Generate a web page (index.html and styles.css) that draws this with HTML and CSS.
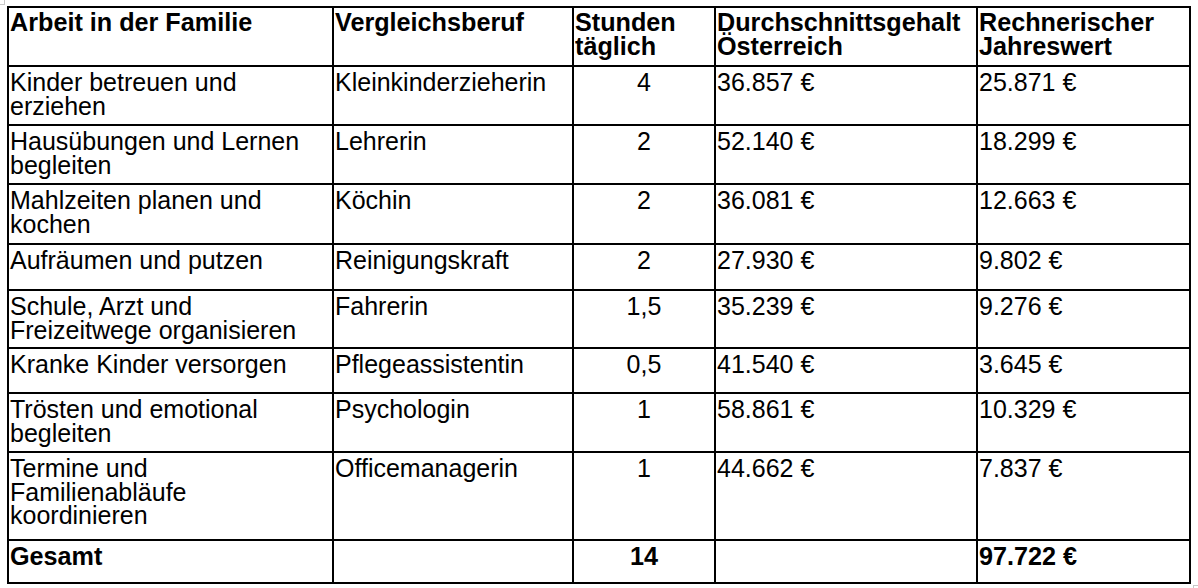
FILE: index.html
```html
<!DOCTYPE html>
<html lang="de">
<head>
<meta charset="utf-8">
<title>Arbeit in der Familie</title>
<link rel="stylesheet" href="styles.css">
</head>
<body>
<span class="mark mark-tl"></span>
<table class="grid">
  <colgroup>
    <col class="c1"><col class="c2"><col class="c3"><col class="c4"><col class="c5">
  </colgroup>
  <thead>
    <tr class="h2">
      <th>Arbeit in der Familie</th>
      <th>Vergleichsberuf</th>
      <th>Stunden<br>täglich</th>
      <th>Durchschnittsgehalt<br>Österreich</th>
      <th>Rechnerischer<br>Jahreswert</th>
    </tr>
  </thead>
  <tbody>
    <tr class="h2">
      <td>Kinder betreuen und<br>erziehen</td><td>Kleinkinderzieherin</td><td class="num">4</td><td>36.857 €</td><td>25.871 €</td>
    </tr>
    <tr class="h2">
      <td>Hausübungen und Lernen<br>begleiten</td><td>Lehrerin</td><td class="num">2</td><td>52.140 €</td><td>18.299 €</td>
    </tr>
    <tr class="h2b">
      <td>Mahlzeiten planen und<br>kochen</td><td>Köchin</td><td class="num">2</td><td>36.081 €</td><td>12.663 €</td>
    </tr>
    <tr class="h1">
      <td>Aufräumen und putzen</td><td>Reinigungskraft</td><td class="num">2</td><td>27.930 €</td><td>9.802 €</td>
    </tr>
    <tr class="h2c">
      <td>Schule, Arzt und<br>Freizeitwege organisieren</td><td>Fahrerin</td><td class="num">1,5</td><td>35.239 €</td><td>9.276 €</td>
    </tr>
    <tr class="h1b">
      <td>Kranke Kinder versorgen</td><td>Pflegeassistentin</td><td class="num">0,5</td><td>41.540 €</td><td>3.645 €</td>
    </tr>
    <tr class="h2">
      <td>Trösten und emotional<br>begleiten</td><td>Psychologin</td><td class="num">1</td><td>58.861 €</td><td>10.329 €</td>
    </tr>
    <tr class="h3">
      <td>Termine und<br>Familienabläufe<br>koordinieren</td><td>Officemanagerin</td><td class="num">1</td><td>44.662 €</td><td>7.837 €</td>
    </tr>
    <tr class="total">
      <td>Gesamt</td><td></td><td class="num">14</td><td></td><td>97.722 €</td>
    </tr>
  </tbody>
</table>
<span class="mark mark-br"></span>
</body>
</html>
```

FILE: styles.css
```css
html, body {
  margin: 0;
  padding: 0;
  background: #ffffff;
}

body {
  position: relative;
  width: 1198px;
  height: 588px;
  overflow: hidden;
  font-family: "Liberation Sans", Arial, sans-serif;
  color: #000000;
}

.grid {
  border-collapse: collapse;
  table-layout: fixed;
  width: 1184px;
  margin: 6px 0 0 7px;
  font-size: 25px;
  line-height: 23.5px;
}

.c1 { width: 325px; }
.c2 { width: 240px; }
.c3 { width: 142px; }
.c4 { width: 262px; }
.c5 { width: 213px; }

.grid th,
.grid td {
  border: 2px solid #000000;
  padding: 4px 1px 0 1px;
  vertical-align: top;
  text-align: left;
  white-space: nowrap;
}

.grid th {
  font-weight: bold;
  font-size: 25.2px;
  padding-top: 3px;
}

.grid td.num {
  text-align: center;
}

.h2 { height: 59px; }
.h2b { height: 60px; }
.h2c { height: 58px; }
.h1 { height: 46px; }
.h1b { height: 45px; }
.h3 { height: 88px; }
.total { height: 43px; }

.total td {
  font-weight: bold;
  font-size: 25.2px;
}

.mark {
  position: absolute;
  display: block;
  border-color: #c8c8c8;
  border-style: solid;
}

.mark-tl {
  left: 0;
  top: 0;
  width: 4px;
  height: 4px;
  border-width: 0 1px 1px 0;
}

.mark-br {
  left: 1193px;
  top: 585px;
  width: 4px;
  height: 4px;
  border-width: 1px 0 0 1px;
}
```
